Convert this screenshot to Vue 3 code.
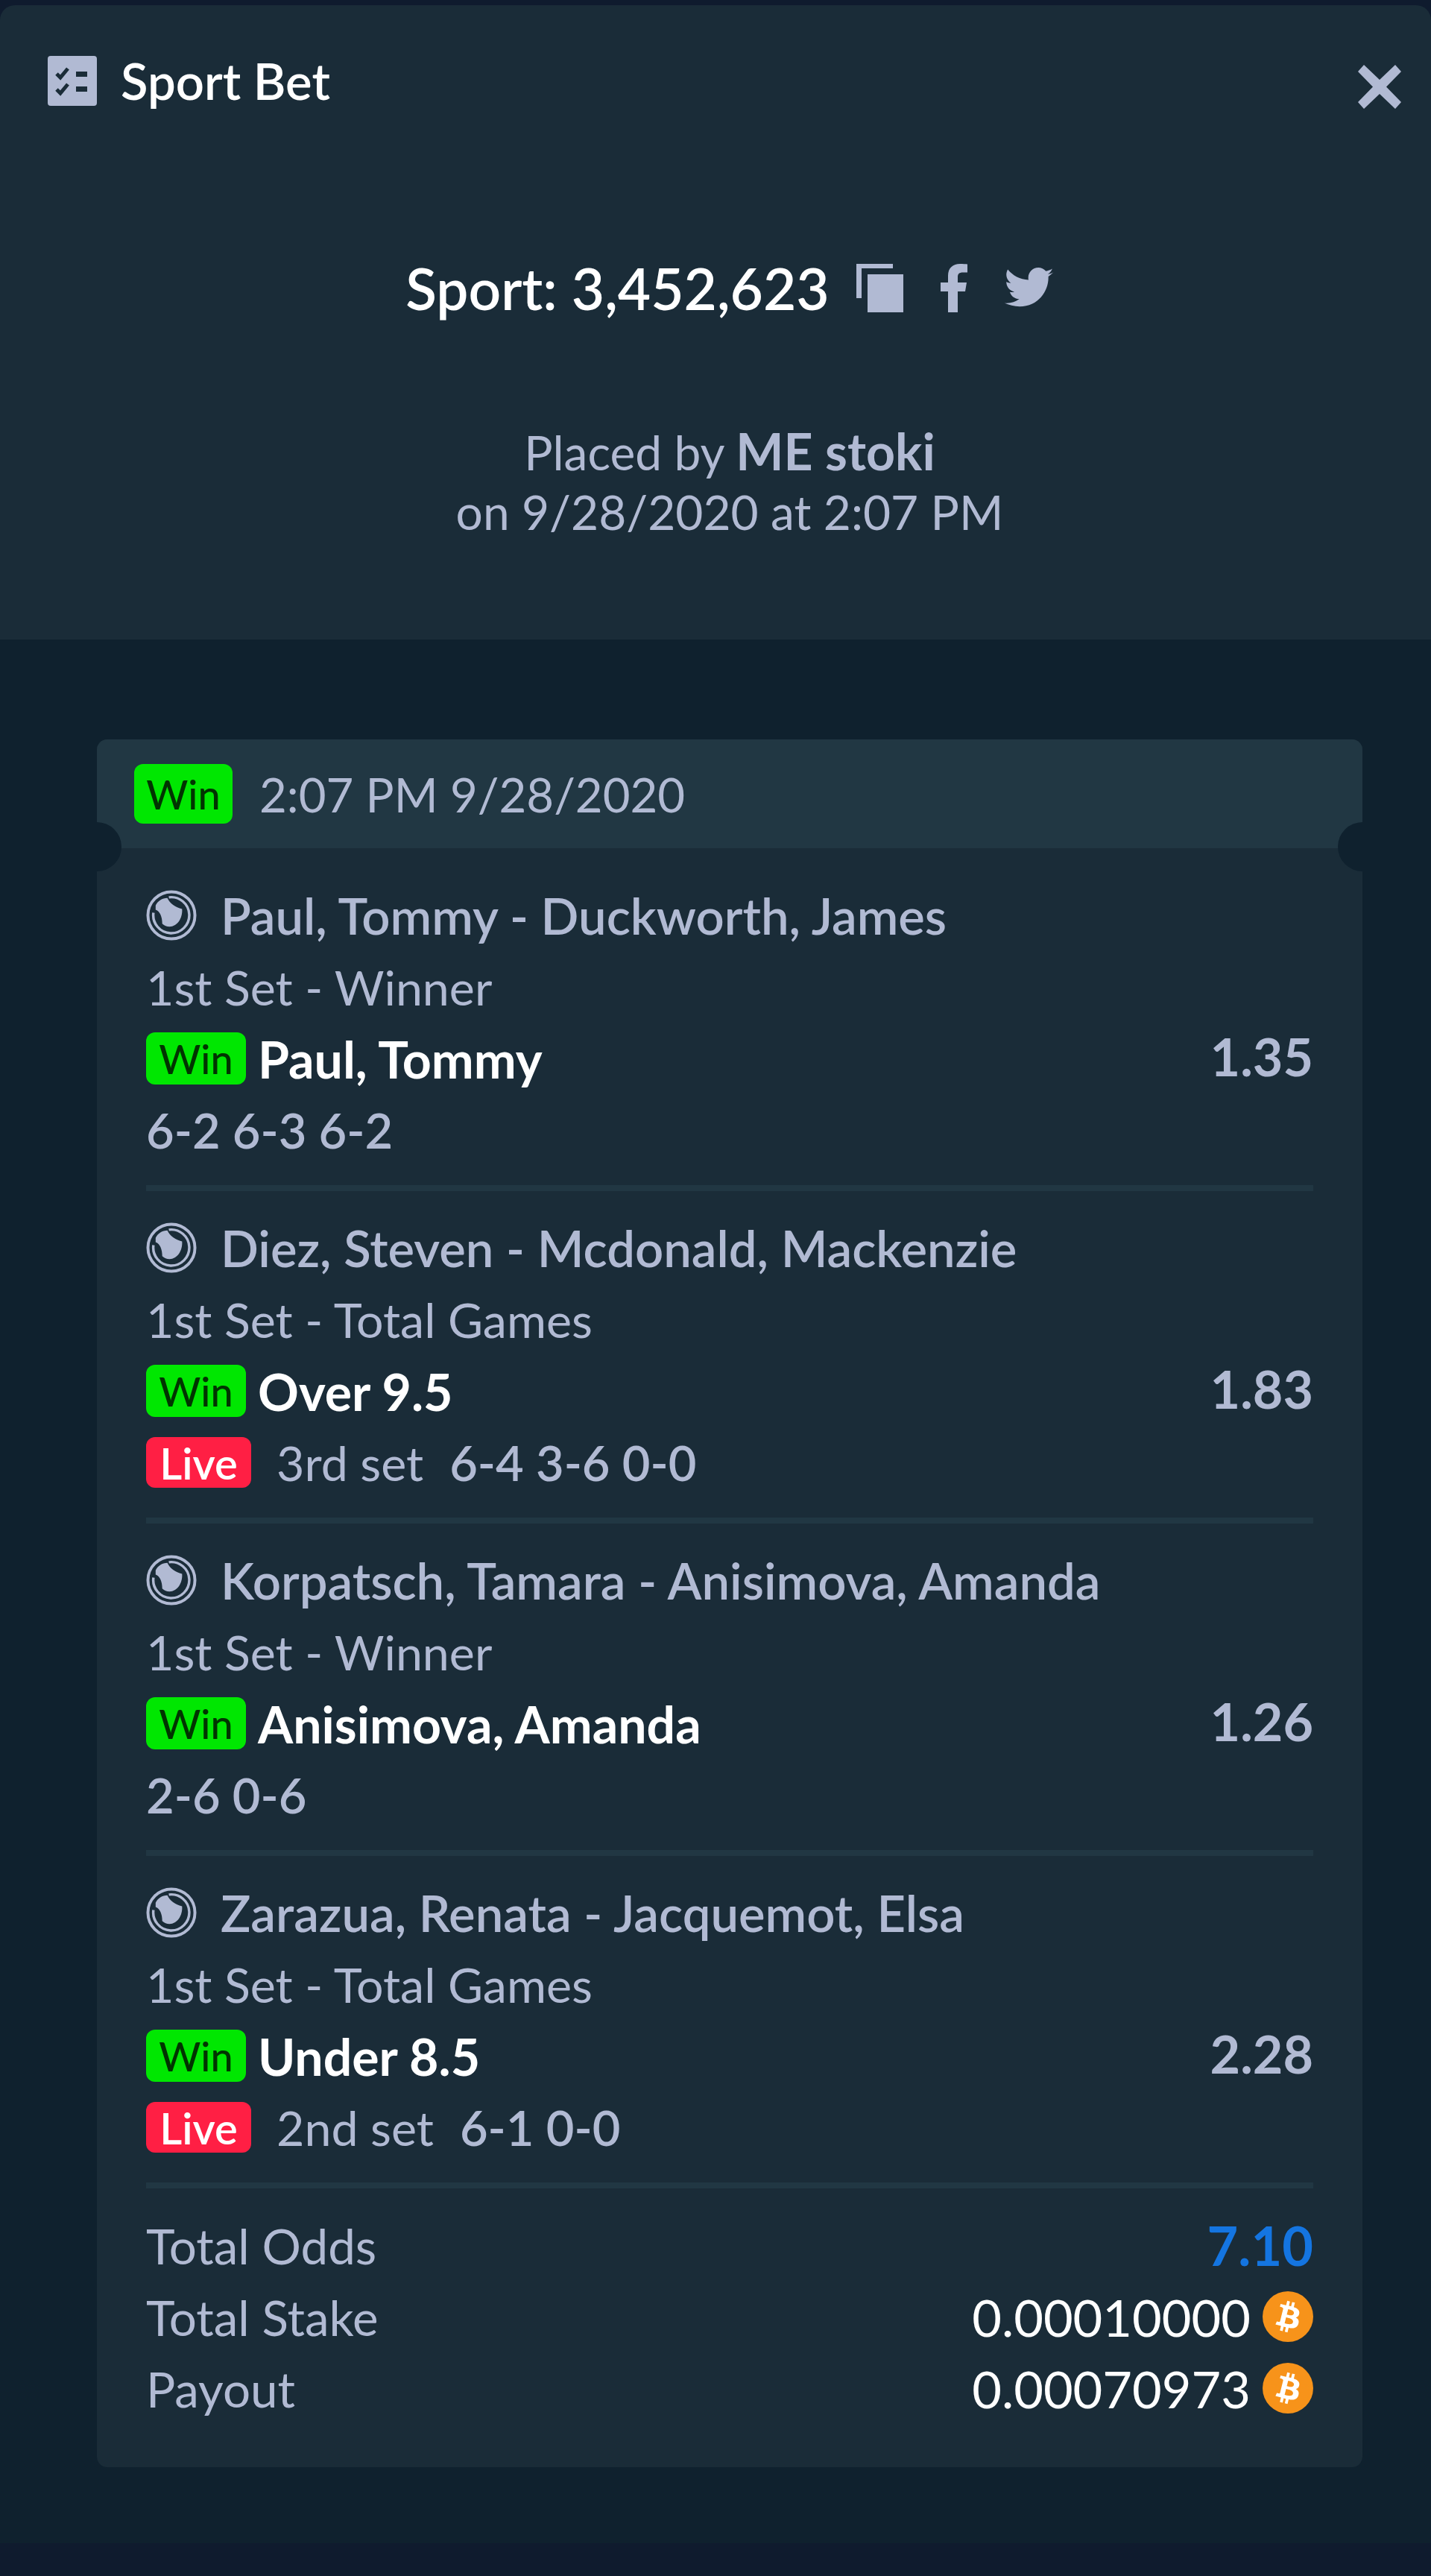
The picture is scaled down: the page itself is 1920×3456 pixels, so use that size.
<script setup>
const legs = [
  { match: 'Paul, Tommy - Duckworth, James', market: '1st Set - Winner', pick: 'Paul, Tommy', odds: '1.35', score: '6-2 6-3 6-2' },
  { match: 'Diez, Steven - Mcdonald, Mackenzie', market: '1st Set - Total Games', pick: 'Over 9.5', odds: '1.83', live: '3rd set', score: '6-4 3-6 0-0' },
  { match: 'Korpatsch, Tamara - Anisimova, Amanda', market: '1st Set - Winner', pick: 'Anisimova, Amanda', odds: '1.26', score: '2-6 0-6' },
  { match: 'Zarazua, Renata - Jacquemot, Elsa', market: '1st Set - Total Games', pick: 'Under 8.5', odds: '2.28', live: '2nd set', score: '6-1 0-0' }
]
const btc = 'M23.189 14.02c.314-2.096-1.283-3.223-3.465-3.975l.708-2.84-1.728-.43-.69 2.765c-.454-.114-.92-.22-1.385-.326l.695-2.783L15.596 6l-.708 2.839c-.376-.086-.746-.17-1.104-.26l.002-.009-2.384-.595-.46 1.846s1.283.294 1.256.312c.7.175.826.638.805 1.006l-.806 3.235c.048.012.11.03.18.057l-.183-.045-1.13 4.532c-.086.212-.303.531-.793.41.018.025-1.256-.313-1.256-.313l-.858 1.978 2.25.561c.418.105.828.215 1.231.318l-.715 2.872 1.727.43.708-2.84c.472.127.93.245 1.378.357l-.706 2.828 1.728.43.715-2.866c2.948.558 5.164.333 6.097-2.333.752-2.146-.037-3.385-1.588-4.192 1.13-.26 1.98-1.003 2.207-2.538zm-3.95 5.538c-.533 2.147-4.148.986-5.32.695l.95-3.805c1.172.293 4.929.872 4.37 3.11zm.535-5.569c-.487 1.953-3.495.96-4.47.717l.86-3.45c.975.243 4.118.696 3.61 2.733z'
const totals = [
  { label: 'Total Stake', value: '0.00010000' },
  { label: 'Payout', value: '0.00070973' }
]
</script>

<template>
  <div class="page">
    <header class="head">
      <div class="head-top">
        <div class="brand">
          <svg class="check" viewBox="0 0 66 67">
            <rect width="66" height="67" rx="4" fill="#b1bad3" />
            <path d="M12 24l5 5 10-12M12 45l5 5 10-12" fill="none" stroke="#1a2c38" stroke-width="5" />
            <path d="M38 21h15v7H38zM38 41h15v7H38z" fill="#1a2c38" />
          </svg>
          <span>Sport Bet</span>
        </div>
        <svg class="close" viewBox="0 0 58 59">
          <path d="M8 0l21 20L50 0l8 9-20 20.500 20 20.500-8 9-21-20-21 20-8-9 20-20.500L0 9z" fill="#b1bad3" />
        </svg>
      </div>
      <div class="bet-id">
        <span class="bet-num">Sport: 3,452,623</span>
        <svg class="copy" viewBox="0 0 63 65">
          <path d="M0 0h49v6H7v40H0z" fill="#b1bad3" />
          <path d="M15 14h48v51H15z" fill="#b1bad3" />
        </svg>
        <svg class="fb" viewBox="0 0 36 65">
          <path d="M10 65V37H0V25h10v-9C10 5 17 0 26 0c4 0 8 .3 10 .5v11h-6c-5 0-7 2-7 6V25h12l-2 12H23v28z" fill="#b1bad3" />
        </svg>
        <svg class="tw" viewBox="0 0 24 20">
          <path d="M24 2.400c-.9.400-1.800.7-2.800.8 1-.6 1.800-1.600 2.200-2.700-1 .6-2 1-3.100 1.200C19.300.7 18 0 16.600 0c-2.700 0-4.900 2.200-4.900 4.900 0 .4 0 .8.100 1.100C7.700 5.800 4.100 3.900 1.700.9c-.4.700-.7 1.600-.7 2.500 0 1.700.9 3.200 2.200 4.100-.8 0-1.600-.2-2.200-.6v.1c0 2.400 1.700 4.400 3.900 4.800-.4.100-.8.200-1.300.2-.3 0-.6 0-.9-.1.600 2 2.400 3.400 4.600 3.400-1.700 1.300-3.800 2.100-6.100 2.100-.4 0-.8 0-1.200-.1C2.200 18.200 4.800 19 7.500 19c9.100 0 14-7.500 14-14v-.6c1-.7 1.800-1.600 2.500-2z" fill="#b1bad3" />
        </svg>
      </div>
      <div class="placed">
        <div>Placed by <strong>ME stoki</strong></div>
        <div>on 9/28/2020 at 2:07 PM</div>
      </div>
    </header>

    <main class="body">
      <section class="card">
        <div class="card-head">
          <span class="badge badge-lg">Win</span>
          <span>2:07 PM 9/28/2020</span>
          <i class="notch notch-l"></i>
          <i class="notch notch-r"></i>
        </div>
        <div class="card-body">
          <div v-for="leg in legs" :key="leg.match" class="leg">
            <div class="line line-title">
              <svg class="ball" viewBox="15 15 69 69">
                <circle cx="49.500" cy="49.500" r="32" fill="none" stroke="#b1bad3" stroke-width="4" />
                <path d="M46 25A24.500 24.500 0 1 1 25 46" fill="none" stroke="#b1bad3" stroke-width="3.500" />
                <path d="M28 36C31 30 37 26 44 26C47 33 55 39 64 41C65 54 57 65 47 65C43 65 40 64 37 61C37 52 34 44 28 42Z" fill="#b1bad3" />
              </svg>
              <span>{{ leg.match }}</span>
            </div>
            <div class="line market">{{ leg.market }}</div>
            <div class="line pick">
              <span class="badge">Win</span>
              <span class="pick-name">{{ leg.pick }}</span>
              <span class="odds">{{ leg.odds }}</span>
            </div>
            <div class="line score">
              <template v-if="leg.live">
                <span class="live">Live</span>
                <span class="set">{{ leg.live }}</span>
              </template>
              <span>{{ leg.score }}</span>
            </div>
          </div>
          <div class="totals">
            <div class="line total">
              <span>Total Odds</span>
              <span class="total-odds">7.10</span>
            </div>
            <div v-for="t in totals" :key="t.label" class="line total">
              <span>{{ t.label }}</span>
              <span class="amount">
                {{ t.value }}
                <svg class="btc" viewBox="0 0 32 32">
                  <circle cx="16" cy="16" r="16" fill="#f7931a" />
                  <path :d="btc" fill="#fff" />
                </svg>
              </span>
            </div>
          </div>
        </div>
      </section>
    </main>
    <div class="foot"></div>
  </div>
</template>

<style>
html, body { margin: 0; background: #0f1b2e; }
</style>

<style scoped>
.page {
  width: 1920px;
  height: 3456px;
  display: flex;
  flex-direction: column;
  box-sizing: border-box;
  padding-top: 7px;
  background: #0f1b2e;
  font-family: Lato, "Liberation Sans", sans-serif;
  color: #b1bad3;
  font-size: 66px;
}
.head {
  height: 851px;
  box-sizing: border-box;
  background: #1a2c38;
  border-radius: 20px 20px 0 0;
}
.head-top {
  display: flex;
  justify-content: space-between;
  align-items: flex-start;
  padding: 68px 40px 0 64px;
  height: 324px;
  box-sizing: border-box;
}
.brand {
  display: flex;
  align-items: center;
  gap: 32px;
  color: #fff;
  font-weight: 600;
  line-height: 67px;
  font-size: 67px;
}
.check { width: 66px; height: 67px; }
.close { width: 58px; height: 59px; margin-top: 12px; }
.bet-id {
  display: flex;
  justify-content: center;
  align-items: center;
  height: 110px;
  padding-left: 38px;
}
.bet-num { color: #fff; font-weight: 600; font-size: 76.500px; }
.copy { width: 63px; height: 65px; margin-left: 36px; }
.fb { width: 36px; height: 65px; margin-left: 50px; }
.tw { width: 67px; height: 55px; margin-left: 49px; }
.placed {
  margin-top: 124px;
  padding-left: 38px;
  text-align: center;
  line-height: 80px;
  font-size: 64px;
}
.placed strong { font-weight: 700; font-size: 68px; }
.body {
  flex: 1;
  background: #0f212e;
  padding: 134px 92px 0 130px;
}
.card {
  background: #1a2c38;
  border-radius: 14px;
  height: 2318px;
  overflow: hidden;
}
.card-head {
  position: relative;
  height: 146px;
  box-sizing: border-box;
  background: #213743;
  display: flex;
  align-items: center;
  gap: 36px;
  padding: 0 50px;
  font-size: 63.500px;
}
.notch {
  position: absolute;
  top: 111px;
  width: 66px;
  height: 66px;
  border-radius: 50%;
  background: #0f212e;
}
.notch-l { left: -33px; }
.notch-r { right: -33px; }
.badge {
  display: inline-flex;
  align-items: center;
  justify-content: center;
  width: 134px;
  height: 70px;
  border-radius: 12px;
  background: #00e701;
  color: #013401;
  font-size: 54px;
  font-weight: 500;
}
.badge-lg { width: 132px; height: 80px; font-size: 54px; }
.card-body { padding: 42px 66px 0; }
.leg {
  padding-bottom: 26px;
  margin-bottom: 36px;
  box-shadow: 0 8px 0 #213743;
}
.line {
  height: 96px;
  display: flex;
  align-items: center;
}
.line-title { font-weight: 600; gap: 32px; font-size: 67px; }
.ball { width: 68px; height: 68px; }
.market { font-size: 64.500px; }
.pick { gap: 16px; }
.pick-name { color: #fff; font-weight: 700; font-size: 68px; }
.odds { margin-left: auto; margin-bottom: 6px; font-weight: 700; font-size: 70px; }
.score { font-weight: 600; font-size: 65px; }
.live {
  display: inline-flex;
  align-items: center;
  justify-content: center;
  width: 141px;
  height: 68px;
  border-radius: 12px;
  background: #ff1f44;
  color: #fff;
  font-size: 58px;
  font-weight: 600;
  margin-right: 34px;
}
.set { font-weight: 400; font-size: 64.500px; margin-right: 35px; }
.total { justify-content: space-between; font-size: 65.500px; }
.total-odds { color: #1475e1; font-weight: 700; font-size: 72px; }
.amount {
  display: flex;
  align-items: center;
  gap: 16px;
  color: #fff;
  font-size: 68.500px;
}
.btc { width: 68px; height: 68px; }
.foot { height: 44px; background: #0f1b2e; }
</style>
